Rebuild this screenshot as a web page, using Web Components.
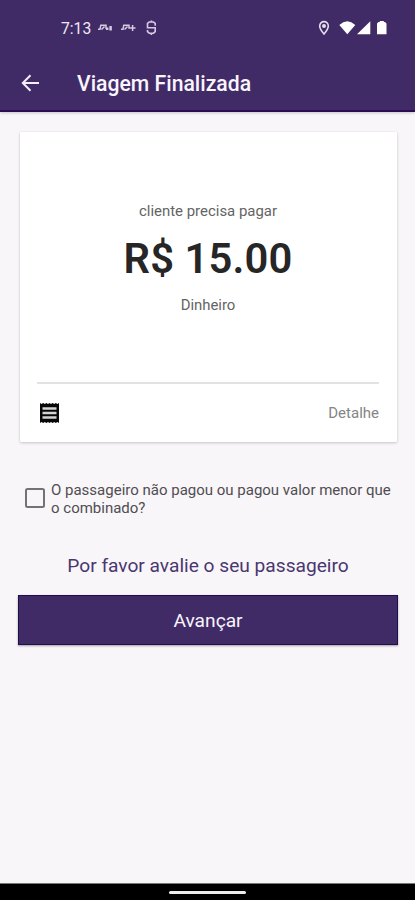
<!DOCTYPE html>
<html lang="pt-BR"><head><meta charset="utf-8"><title>Viagem Finalizada</title>
<style>
html,body{margin:0;height:100%}
body{font-family:Roboto,"Liberation Sans",sans-serif;background:#f8f6f8;overflow:hidden}
</style></head><body>
<trip-screen></trip-screen>
<script>
const define=(name,html)=>customElements.define(name,class extends HTMLElement{
  constructor(){super();this.attachShadow({mode:'open'}).innerHTML=html;}
});
define('status-bar',`<style>
:host{display:flex;align-items:center;height:56px;box-sizing:border-box;padding:0 28px 0 61px;color:#eeeaf5;font-size:15.700px;line-height:20px}
.time{width:30px;white-space:nowrap;padding-top:1px}
.left{margin-left:7px}.right{margin-left:auto}
svg{display:block}
</style><span class="time"><slot></slot></span>
<svg class="left" width="62" height="20" viewBox="0 0 62 20" fill="none" stroke="#d3cbe0" stroke-width="1.500">
<path d="M0 11.200h2l.8-4h5.200v3.500M3.500 11.500l3-3"/><path stroke-width="2.500" d="M9.200 9.500v2.500M12.600 8v4.500"/>
<path d="M23 11.200h2l.8-4h5.200v3.500M26.500 11.500l3-3M34.600 7v6M31.500 10h6"/>
<path stroke-width="1.600" d="M57.200 7.800V5.300L55.500 4H51.200L49.500 5.300V9.700H57.200V13.700L55.500 15.200H51.200L49.500 13.700V12M53.400 2.500V4M53.400 15.200V17"/></svg>
<svg class="right" width="69" height="20" viewBox="0 0 69 20">
<path d="M6 3.600a4.300 4.300 0 0 0-4.300 4.300c0 3 4.300 8 4.300 8s4.300-5 4.300-8A4.300 4.300 0 0 0 6 3.600z" fill="none" stroke="#e4deed" stroke-width="1.600"/><circle cx="6" cy="8" r="2" fill="#e4deed"/>
<path fill="#fff" d="M21.300 6.900Q29.300 -.200 37.300 6.900L29.300 16.200zM39 16.200 52.300 3.200V16.200zM59 5.500 60.500 4H61.800V3h4V4H67l1.500 1.500V16.200H59z"/></svg>`);
define('app-bar',`<style>
:host{display:flex;align-items:center;height:56px;box-sizing:border-box;padding:0 21px;color:#f8f5fc;font-size:21.200px;font-weight:500;border-bottom:2px solid #2d0b55}
svg{display:block;flex:none;margin-right:37px}
h1{font:inherit;margin:0;padding-top:1px;line-height:28px;white-space:nowrap}
</style><svg width="19" height="18" viewBox="0 0 19 18" fill="none" stroke="#f3eff8" stroke-width="2"><path d="M9.500 1.200 1.800 9l7.700 7.800M1.800 9H18"/></svg><h1><slot></slot></h1>`);
define('fare-card',`<style>
:host{display:flex;flex-direction:column;box-sizing:border-box;height:310px;padding:0 18px;background:#fff;box-shadow:0 1px 3px rgba(0,0,0,.2),0 0 1px rgba(0,0,0,.1);border-radius:1px}
.fare{height:252px;box-sizing:border-box;padding-top:69px;text-align:center;border-bottom:2px solid #e2e2e2;white-space:nowrap;margin-left:-1px}
.foot{flex:1;display:flex;align-items:center;justify-content:space-between;padding:0 0 0 2px}
svg{display:block}
</style><div class="fare"><slot></slot></div><div class="foot">
<svg width="19" height="20" viewBox="0 0 19 20"><path fill="#080808" d="M0 0 1.600 1 3.200 0 4.800 1 6.400 0 8 1 9.500 0 11 1 12.600 0 14.200 1 15.800 0 17.400 1 19 0V20L17.400 19 15.800 20 14.200 19 12.600 20 11 19 9.500 20 8 19 6.400 20 4.800 19 3.200 20 1.600 19 0 20z"/><path stroke="#d4d4d4" stroke-width="2.600" d="M2.500 5.500H16.500M2.500 10H16.500M2.500 14.500H16.500"/></svg>
<slot name="action"></slot></div>`);
define('check-row',`<style>
:host{display:flex;align-items:flex-start;color:#504d52}
.box{flex:none;box-sizing:border-box;width:20px;height:20px;border:2px solid #757277;border-radius:2.500px;margin:7px 6px 0 0}
</style><span class="box"></span><slot></slot>`);
define('primary-button',`<style>
:host{display:block}
button{display:block;width:100%;height:50px;border:1px solid #210c50;border-radius:0;padding:0;background:#412b67;color:#f7f4fb;font:inherit;box-shadow:0 1px 2px rgba(0,0,0,.35)}
</style><button><slot></slot></button>`);
define('nav-bar',`<style>
:host{display:flex;justify-content:center;height:17px;box-sizing:border-box;padding-top:7px;background:#000;border-top:1px solid #777}
i{width:77px;height:3px;border-radius:2px;background:#eee}
</style><i></i>`);
define('trip-screen',`<style>
:host{display:flex;flex-direction:column;height:900px;width:415px;background:#f8f6f8}
header{background:#412b67;box-shadow:0 1px 3px rgba(0,0,0,.2)}
main{flex:1;display:flex;flex-direction:column;padding:20px 17px 0 18px}
fare-card{margin:0 1px 0 2px}
.t{display:block;white-space:nowrap}
.a{font-size:14.950px;line-height:20px;color:#646464}
.b{font-size:41.700px;line-height:50px;font-weight:600;color:#262626;margin-top:13px;letter-spacing:.150px}
.c{font-size:14.900px;line-height:20px;color:#646464;margin-top:11px}
.d{font-size:15px;color:#858585}
check-row{margin:39px 0 0 7px;font-size:15px;line-height:17.500px}
.row-text{padding-top:.5px;margin-top:.5px}
.p{margin:35px 0 0;text-align:center;font-size:19.150px;line-height:26px;color:#4a3670}
primary-button{margin-top:16px;font-size:19.200px;font-weight:450}
main .p{margin-top:36px}
</style>
<header><status-bar><span>7:13</span></status-bar><app-bar>Viagem Finalizada</app-bar></header>
<main><fare-card><span class="t a">cliente precisa pagar</span><span class="t b">R$ 15.00</span><span class="t c">Dinheiro</span><span slot="action" class="d">Detalhe</span></fare-card>
<check-row><span class="row-text">O passageiro não pagou ou pagou valor menor que<br>o combinado?</span></check-row>
<p class="p">Por favor avalie o seu passageiro</p>
<primary-button>Avançar</primary-button></main><nav-bar></nav-bar>`);
</script></body></html>
